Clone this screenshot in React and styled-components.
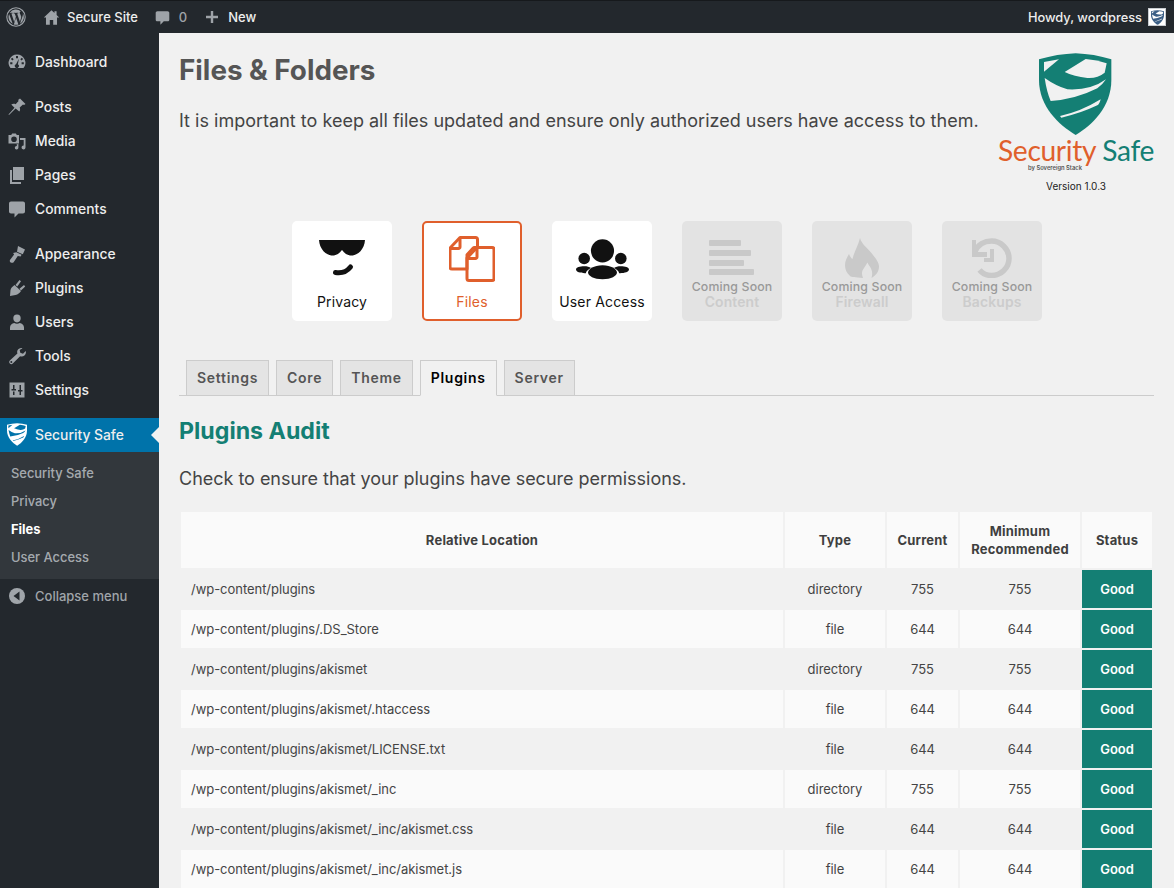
import React from 'react';
import styled, { createGlobalStyle } from 'styled-components';

const GlobalStyle = createGlobalStyle`
  html, body {
    margin: 0;
    padding: 0;
    background: #f1f1f1;
    height: 888px;
    overflow: hidden;
  }
  body {
    font-family: Inter, "Liberation Sans", sans-serif;
    color: #444;
  }
  * { box-sizing: border-box; }
`;

const Page = styled.div`
  width: 1174px;
  height: 888px;
  display: flex;
  flex-direction: column;
  overflow: hidden;
`;

const AdminBar = styled.header`
  height: 33px;
  flex: none;
  background: #23282d;
  border-top: 1px solid #16191c;
  display: flex;
  align-items: center;
  color: #eee;
  font-size: 13px;
  font-weight: 500;
`;

const BarItem = styled.div`
  display: flex;
  align-items: center;
  gap: ${(p) => p.$gap || 5}px;
  margin-left: ${(p) => p.$left || 0}px;
  color: ${(p) => p.$muted ? '#9ea3a8' : '#eee'};
  white-space: nowrap;
`;

const Howdy = styled.div`
  margin-left: auto;
  margin-right: 8px;
  display: flex;
  align-items: center;
  gap: 6px;
  font-size: 12.8px;
`;

const Avatar = styled.div`
  width: 18px;
  height: 18px;
  background: #fff;
  border: 1px solid #c8ccd0;
  display: flex;
  align-items: center;
  justify-content: center;
`;

const Main = styled.div`
  flex: 1;
  display: flex;
  min-height: 0;
`;

const Sidebar = styled.nav`
  width: 159px;
  flex: none;
  background: #23282d;
  padding-top: 12px;
`;

const MenuItem = styled.div`
  height: 34px;
  display: flex;
  align-items: center;
  position: relative;
  padding: 0 0 1px 7px;
  gap: 8px;
  margin-bottom: ${(p) => p.$sep ? 11 : 0}px;
  background: ${(p) => p.$active ? '#0073aa' : 'transparent'};
  color: #eee;
  font-size: 13.85px;
  font-weight: 500;
  svg { flex: none; }
`;

const Caret = styled.span`
  position: absolute;
  right: 0;
  top: 50%;
  margin-top: -8px;
  border: 8px solid transparent;
  border-right-color: #f1f1f1;
  border-left-width: 0;
`;

const SubMenu = styled.div`
  height: 127px;
  padding: 7px 0 0 11px;
  background: #32373c;
`;

const SubItem = styled.div`
  height: 28px;
  display: flex;
  align-items: center;
  font-size: 12.9px;
  font-weight: ${(p) => p.$on ? 700 : 500};
  color: ${(p) => p.$on ? '#fff' : 'rgba(240,245,250,.62)'};
`;

const Collapse = styled.div`
  height: 34px;
  display: flex;
  align-items: center;
  gap: 10px;
  padding-left: 9px;
  color: #a0a5aa;
  font-size: 13px;
  font-weight: 500;
`;

const Content = styled.main`
  flex: 1;
  padding: 0 20px;
  min-width: 0;
`;

const Header = styled.div`
  display: flex;
  justify-content: space-between;
  height: 188px;
`;

const Title = styled.h1`
  margin: 20px 0 0;
  font-size: 27.8px;
  line-height: 34px;
  font-weight: 700;
  color: #555;
`;

const Lead = styled.p`
  margin: 22px 0 0;
  font-size: 18px;
  line-height: 24px;
  letter-spacing: 0.01px;
  white-space: nowrap;
  color: #444;
`;

const Logo = styled.div`
  width: 156px;
  padding-top: 17px;
  display: flex;
  flex-direction: column;
  align-items: center;
`;

const Wordmark = styled.div`
  margin-top: -4px;
  height: 28px;
  font-family: Lato, "Open Sans", sans-serif;
  font-size: 28.2px;
  line-height: 28px;
  letter-spacing: -0.36px;
  white-space: nowrap;
  color: #e05f2c;
`;

const Teal = styled.span`
  color: #147f74;
`;

const ByLine = styled.div`
  margin-left: -42px;
  font-size: 5.8px;
  line-height: 7px;
  font-weight: 600;
  color: #555;
`;

const Version = styled.div`
  margin-top: 9px;
  font-size: 10px;
  line-height: 12px;
  color: #222;
`;

const Cards = styled.div`
  display: flex;
  gap: 30px;
  padding-left: 113px;
`;

const Card = styled.div`
  width: 100px;
  height: 100px;
  border-radius: 5px;
  background: ${(p) => p.$soon ? '#e3e3e3' : '#fff'};
  border: ${(p) => p.$on ? '2px solid #e05f2c' : 'none'};
  color: ${(p) => p.$on ? '#e05f2c' : '#111'};
  display: flex;
  flex-direction: column;
  align-items: center;
  font-size: 14px;
  letter-spacing: 0.16px;
`;

const CardIcon = styled.div`
  height: ${(p) => p.$soon ? 49 : 60}px;
  margin-top: ${(p) => p.$on ? 6 : p.$soon ? 12 : 8}px;
  display: flex;
  align-items: center;
  justify-content: center;
`;

const CardLabel = styled.div`
  line-height: 18px;
  margin-top: 4px;
  white-space: nowrap;
`;

const SoonLine = styled.div`
  font-size: 12.3px;
  line-height: 15px;
  color: #999;
  font-weight: 500;
  margin-top: -3px;
  white-space: nowrap;
`;

const SoonName = styled.div`
  font-size: 13.9px;
  line-height: 16px;
  color: #ccc;
  font-weight: 600;
  white-space: nowrap;
`;

const Tabs = styled.div`
  display: flex;
  gap: 7px;
  margin-top: 39px;
  height: 36px;
  padding-left: 7px;
  border-bottom: 1px solid #ccc;
`;

const Tab = styled.div`
  height: ${(p) => p.$on ? 36 : 35}px;
  padding: 0 10px 2px;
  border: 1px solid #ccc;
  border-bottom: ${(p) => p.$on ? '1px solid #f1f1f1' : 'none'};
  background: ${(p) => p.$on ? '#f1f1f1' : '#e4e4e4'};
  color: ${(p) => p.$on ? '#000' : '#555'};
  display: flex;
  align-items: center;
  font-size: 14px;
  font-weight: 600;
  letter-spacing: 0.7px;
`;

const SectionTitle = styled.h2`
  margin: 20px 0 0;
  font-size: 23.2px;
  line-height: 30px;
  font-weight: 700;
  color: #147f74;
`;

const SectionText = styled.p`
  margin: 21px 0 0;
  font-size: 18px;
  line-height: 24px;
  letter-spacing: -0.02px;
  color: #444;
`;

const Table = styled.table`
  margin-top: 19px;
  border-spacing: 2px;
  border-collapse: separate;
  width: 975px;
  table-layout: fixed;
  font-size: 13px;
  letter-spacing: -0.04px;
  color: #444;
`;

const Th = styled.th`
  height: 56px;
  padding: 0;
  background: #fafafa;
  font-weight: 700;
  line-height: 18px;
  letter-spacing: 0.2px;
  color: #3f3f3f;
`;

const Td = styled.td`
  height: 38px;
  padding: 0 ${(p) => p.$left ? 10 : 0}px;
  text-align: ${(p) => p.$left ? 'left' : 'center'};
  background: ${(p) => p.$alt ? '#fafafa' : 'transparent'};
`;

const StatusCell = styled.td`
  height: 38px;
  padding: 0;
  text-align: center;
  background: #147f74;
  color: #fff;
  font-weight: 600;
`;

const rows = [
  ['/wp-content/plugins', 'directory', 755],
  ['/wp-content/plugins/.DS_Store', 'file', 644],
  ['/wp-content/plugins/akismet', 'directory', 755],
  ['/wp-content/plugins/akismet/.htaccess', 'file', 644],
  ['/wp-content/plugins/akismet/LICENSE.txt', 'file', 644],
  ['/wp-content/plugins/akismet/_inc', 'directory', 755],
  ['/wp-content/plugins/akismet/_inc/akismet.css', 'file', 644],
  ['/wp-content/plugins/akismet/_inc/akismet.js', 'file', 644],
];

const Dash = ({ size = 20, color = '#9ea3a8', children }) => (
  <svg width={size} height={size} viewBox="0 0 20 20" fill={color}>{children}</svg>
);

const WpLogo = () => (
  <svg width="20" height="20" viewBox="0 0 20 20">
    <circle cx="10" cy="10" r="9.2" fill="none" stroke="#9ea3a8" strokeWidth="1.1" />
    <path fill="#9ea3a8" d="M2.5 10c0 3 1.7 5.5 4.2 6.7L3.1 7A7.5 7.5 0 0 0 2.5 10zM15 9.6c0-.9-.3-1.6-.6-2.100-.4-.6-.7-1.100-.7-1.700 0-.7.5-1.300 1.200-1.300h.1A7.500 7.500 0 0 0 3.700 5.900h.5c.8 0 2-.1 2-.1.400 0 .500.600.100.600 0 0-.400 0-.900.100l2.800 8.400 1.700-5.100-1.200-3.300c-.400 0-.800-.100-.800-.100-.400 0-.400-.600 0-.600 0 0 1.300.100 2 .100.800 0 2-.100 2-.100.400 0 .500.600.100.600 0 0-.400 0-.900.100l2.800 8.300.800-2.600c.300-1.100.600-1.900.600-2.600zM10.100 10.700l-2.300 6.800a7.500 7.500 0 0 0 4.600-.100l-.100-.100zM16.800 6.300c0 .3.100.600.100 1 0 .800-.100 1.600-.600 2.800l-2.300 6.600a7.500 7.500 0 0 0 2.800-10.400z" />
  </svg>
);

const HomeIcon = () => (
  <Dash size={17}>
    <path d="M10 1.500 1 10h2.500v8.500h4.500v-5.500h4v5.500h4.500V10H19l-3-2.800V2.500h-2.500v2.300z" />
  </Dash>
);

const BubbleIcon = ({ size = 20 }) => (
  <Dash size={size}>
    <path d="M4 2.500h12c1.100 0 2 .9 2 2v8c0 1.100-.9 2-2 2h-4.500L7.500 18.500v-4H4c-1.100 0-2-.9-2-2v-8c0-1.100.9-2 2-2z" />
  </Dash>
);

const PlusIcon = () => (
  <Dash size={16}>
    <path d="M8.500 2.500h3v6h6v3h-6v6h-3v-6h-6v-3h6z" />
  </Dash>
);

const Gauge = () => (
  <Dash>
    <path fillRule="evenodd" d="M10 2.500a8.300 8.300 0 0 0-6.500 13.500h13A8.300 8.300 0 0 0 10 2.500zM9 4h2v2.200H9zM5.200 5.700l1.500 1.500-1.300 1.200-1.500-1.400zM14.800 5.700l1.300 1.300-1.500 1.400-1.300-1.200zM3.200 10.300h2.200v2H3.200zM14.600 10.300h2.200v2h-2.200zM11.900 6.800l-1 5.500a2 2 0 1 1-1.900-.1z" />
  </Dash>
);

const Pin = () => (
  <Dash>
    <path d="M13 1.500l5.500 5.500-1.500 1-1-.6-3.300 3c.7 1.600.5 3-.4 4.200L8.600 11.400 2 18l-.5-.5 6-6.700L4.300 7.600c1.200-1 2.700-1.200 4.300-.4l3-3.300-.5-1z" />
  </Dash>
);

const MediaIcon = () => (
  <Dash>
    <path fillRule="evenodd" d="M1.500 4h2.700l1-1.500h3.600l1 1.500H12v8.500H1.500zM7 5.500a2.800 2.800 0 1 0 0 5.600 2.800 2.800 0 0 0 0-5.600z" />
    <path d="M13 7h5.500v9.500a2 2 0 1 1-1.800-2V9H13zM9 13.500l2.400-.5v3.700a1.800 1.800 0 1 1-1.600-1.800v-1.300z" />
  </Dash>
);

const PagesIcon = () => (
  <Dash>
    <path d="M6 2h11v13H6zM3 5h2v12h9v2H3z" />
  </Dash>
);

const Brush = () => (
  <Dash>
    <path d="M11 2l7 3.500-2.200 4.800-5.800-2.500zM9.300 8.300l5.300 2.400-1 1.800-2.800-.6-4 6.100c-.6.900-1.900 1.100-3 .5-1-.6-1.300-1.600-.8-2.500l4.100-5.600-1-1.500z" />
  </Dash>
);

const PlugIcon = () => (
  <Dash>
    <path d="M3 18l.5-6c.5-2 2-3.500 4-5l6.500 6c-1.500 2-3 3.500-5.500 4zM8.500 7l4-5 1.500 1.200-3.700 5.300zM12.500 10.800L17 7l1.200 1.500-4.200 4z" />
  </Dash>
);

const UserIcon = () => (
  <Dash>
    <path d="M10 2.500a3.700 3.700 0 0 1 3.700 3.800c0 2.300-1.500 4.200-3.700 4.200S6.300 8.600 6.300 6.300A3.700 3.700 0 0 1 10 2.500zM3 15.500c0-2.500 2-3.800 4.200-4.400 1.700 1 3.900 1 5.600 0 2.200.6 4.200 1.900 4.200 4.400V18H3z" />
  </Dash>
);

const Wrench = () => (
  <Dash>
    <path d="M15.500 2.200c-2-.6-4.300.4-5.100 2.300-.4 1-.4 2 0 2.900L2.800 14.600a2.100 2.100 0 0 0 3 3l7.300-7.300c2.700 1 5.500-.8 5.800-3.600 0-.6 0-1.100-.2-1.600L16 7.800l-2.700-1-.6-2.700z" />
    <circle cx="4.300" cy="16" r="1" fill="#23282d" />
  </Dash>
);

const SettingsIcon = () => (
  <Dash>
    <path fillRule="evenodd" d="M2.500 2.500h15v15h-15zM6 5h1.500v4H9v1.500H4.500V9H6zM12.500 5H14v5h1.500v1.500H14V15h-1.500v-3.500H11V10h1.500zM6 11.500h1.500V15H6z" />
  </Dash>
);

const Shield = ({ width, height, color, gap, tight }) => (
  <svg width={width} height={height} viewBox={tight ? '15 10 217 245' : '0 0 252 270'}>
    <path fill={color} d="M15 28Q70 12 125 10 180 12 232 28L232 90C232 170 175 225 125 255 75 225 15 170 15 90Z" />
    <g fill={gap}>
      <path d="M30 36L75 28 30 65Z" />
      <path d="M92 66L155 27Q190 30 218 40L212 68Q190 86 160 84 120 80 92 66Z" />
      <path d="M32 84Q66 108 100 118 170 122 216 88 205 105 190 115 125 148 50 153 38 125 32 84Z" />
      <path d="M78 198Q140 185 200 148 197 162 190 166 140 190 82 203Z" />
    </g>
  </svg>
);

const Shades = () => (
  <svg width="46" height="38" viewBox="0 0 46 38">
    <path fill="#111" d="M0 0h46c-.5 9-7 15.500-13.500 15.500-4.500 0-7-2.500-9.500-5.500-2.500 3-5 5.500-9.500 5.500C7 15.500.5 9 0 0z" />
    <path fill="none" stroke="#111" strokeWidth="5" strokeLinecap="round" d="M16.500 32.500c6 1 11-.5 15-5.500" />
  </svg>
);

const FilesIcon = () => (
  <svg width="46" height="46" viewBox="0 0 46 46" fill="none" stroke="#e05f2c" strokeWidth="3" strokeLinejoin="round">
    <path d="M11 1.500h15.500a2 2 0 0 1 2 2v8H26a2 2 0 0 0-2 .8l-6 6.500v14.200H3a2 2 0 0 1-2-2V12z" />
    <path d="M11 2v9a1.500 1.500 0 0 1-1.500 1.500H1.500" />
    <path d="M28 11.500h15a2 2 0 0 1 2 2V42.500a2 2 0 0 1-2 2H20a2 2 0 0 1-2-2V22z" />
    <path d="M28 12v9a1.500 1.500 0 0 1-1.500 1.500H18" />
  </svg>
);

const GroupIcon = () => (
  <svg width="53" height="41" viewBox="0 0 55 42" fill="#111">
    <circle cx="27.500" cy="12" r="12" />
    <circle cx="8.500" cy="20" r="6" />
    <circle cx="46.500" cy="20" r="6" />
    <path d="M27.500 27c9 0 15 4 15 7.500S36.500 41.500 27.500 41.500 12.500 38 12.500 34.500 18.500 27 27.500 27z" />
    <path d="M8.500 28c3 0 5.500.6 7 1.800-3 1.500-5 3.300-5.300 5.500C5 35.500 0 34 0 31.500S4 28 8.500 28z" />
    <path d="M46.500 28c-3 0-5.500.6-7 1.800 3 1.500 5 3.300 5.300 5.500 5.200.2 10.200-1.300 10.200-3.800S51 28 46.500 28z" />
  </svg>
);

const ContentIcon = () => (
  <svg width="46" height="36" viewBox="0 0 46 36" fill="#c9c9c9">
    <rect x="0" y="0" width="32" height="6" rx="1" />
    <rect x="0" y="10" width="42" height="6" rx="1" />
    <rect x="0" y="20" width="35" height="6" rx="1" />
    <rect x="0" y="29" width="45" height="6" rx="1" />
  </svg>
);

const FireIcon = () => (
  <svg width="34" height="40" viewBox="0 0 34 40" fill="#c9c9c9">
    <path d="M15 0c1.500 6 7 9.500 11 14.500 4 5 8 9.500 8 14 0 5-3 9-7.500 11.500 1-3.500 1-6.500-.5-9.500-1-2-2.500-3.500-3.500-6-1.500 3-3.500 5-5 8-1 2.500-.500 5 .500 7.500C9.500 39 7 39.500 5 38 1.500 35 0 31 0 27c0-4 2-8 4-11 1 2.500 2 4 3.500 5C9 14 13 8 15 0z" />
  </svg>
);

const BackupIcon = () => (
  <svg width="40" height="40" viewBox="0 0 40 40" fill="none" stroke="#c9c9c9" strokeWidth="5.500">
    <path d="M3 13.500C6 6.500 12.500 3 19.500 3 29 3 37 11 37 20.500S29 37.500 19.500 37.500c-5 0-9-2-12-5.500" />
    <path d="M20 11v11h-8" strokeWidth="4" />
    <path d="M0 2h4v12h11v5H0z" fill="#c9c9c9" stroke="none" />
  </svg>
);

const menuTop = [
  ['Dashboard', <Gauge />, true],
  ['Posts', <Pin />],
  ['Media', <MediaIcon />],
  ['Pages', <PagesIcon />],
  ['Comments', <BubbleIcon />, true],
  ['Appearance', <Brush />],
  ['Plugins', <PlugIcon />],
  ['Users', <UserIcon />],
  ['Tools', <Wrench />],
  ['Settings', <SettingsIcon />, true],
];

const App = () => (
  <Page>
    <GlobalStyle />
    <AdminBar>
      <BarItem $left={6}><WpLogo /></BarItem>
      <BarItem $left={17} $gap={7}><HomeIcon />Secure Site</BarItem>
      <BarItem $left={16} $muted $gap={8}><BubbleIcon size={17} />0</BarItem>
      <BarItem $left={17} $gap={8}><PlusIcon />New</BarItem>
      <Howdy>
        Howdy, wordpress
        <Avatar><Shield width={13} height={15} color="#3b5f86" gap="#fff" tight /></Avatar>
      </Howdy>
    </AdminBar>
    <Main>
      <Sidebar>
        {menuTop.map(([label, icon, sep]) => (
          <MenuItem key={label} $sep={sep}>{icon}{label}</MenuItem>
        ))}
        <MenuItem $active>
          <Shield width={20} height={23} color="#fff" gap="#0073aa" tight />
          Security Safe
          <Caret />
        </MenuItem>
        <SubMenu>
          <SubItem>Security Safe</SubItem>
          <SubItem>Privacy</SubItem>
          <SubItem $on>Files</SubItem>
          <SubItem>User Access</SubItem>
        </SubMenu>
        <Collapse>
          <svg width="16" height="16" viewBox="0 0 16 16">
            <circle cx="8" cy="8" r="8" fill="#a0a5aa" />
            <path d="M10.500 3.500v9L4.500 8z" fill="#23282d" />
          </svg>
          Collapse menu
        </Collapse>
      </Sidebar>
      <Content>
        <Header>
          <div>
            <Title>Files &amp; Folders</Title>
            <Lead>It is important to keep all files updated and ensure only authorized users have access to them.</Lead>
          </div>
          <Logo>
            <Shield width={84} height={90} color="#147f74" gap="#f1f1f1" />
            <Wordmark>Security <Teal>Safe</Teal></Wordmark>
            <ByLine>by Sovereign Stack</ByLine>
            <Version>Version 1.0.3</Version>
          </Logo>
        </Header>
        <Cards>
          <Card>
            <CardIcon><Shades /></CardIcon>
            <CardLabel>Privacy</CardLabel>
          </Card>
          <Card $on>
            <CardIcon $on><FilesIcon /></CardIcon>
            <CardLabel>Files</CardLabel>
          </Card>
          <Card>
            <CardIcon><GroupIcon /></CardIcon>
            <CardLabel>User Access</CardLabel>
          </Card>
          <Card $soon>
            <CardIcon $soon><ContentIcon /></CardIcon>
            <SoonLine>Coming Soon</SoonLine>
            <SoonName>Content</SoonName>
          </Card>
          <Card $soon>
            <CardIcon $soon><FireIcon /></CardIcon>
            <SoonLine>Coming Soon</SoonLine>
            <SoonName>Firewall</SoonName>
          </Card>
          <Card $soon>
            <CardIcon $soon><BackupIcon /></CardIcon>
            <SoonLine>Coming Soon</SoonLine>
            <SoonName>Backups</SoonName>
          </Card>
        </Cards>
        <Tabs>
          <Tab>Settings</Tab>
          <Tab>Core</Tab>
          <Tab>Theme</Tab>
          <Tab $on>Plugins</Tab>
          <Tab>Server</Tab>
        </Tabs>
        <SectionTitle>Plugins Audit</SectionTitle>
        <SectionText>Check to ensure that your plugins have secure permissions.</SectionText>
        <Table>
          <colgroup>
            <col style={{ width: 602 }} />
            <col style={{ width: 100 }} />
            <col style={{ width: 71 }} />
            <col style={{ width: 120 }} />
            <col style={{ width: 70 }} />
          </colgroup>
          <thead>
            <tr>
              <Th>Relative Location</Th>
              <Th>Type</Th>
              <Th>Current</Th>
              <Th>Minimum<br />Recommended</Th>
              <Th>Status</Th>
            </tr>
          </thead>
          <tbody>
            {rows.map(([path, type, mode], i) => (
              <tr key={path}>
                <Td $left $alt={i % 2 === 1}>{path}</Td>
                <Td $alt={i % 2 === 1}>{type}</Td>
                <Td $alt={i % 2 === 1}>{mode}</Td>
                <Td $alt={i % 2 === 1}>{mode}</Td>
                <StatusCell>Good</StatusCell>
              </tr>
            ))}
          </tbody>
        </Table>
      </Content>
    </Main>
  </Page>
);

export default App;
